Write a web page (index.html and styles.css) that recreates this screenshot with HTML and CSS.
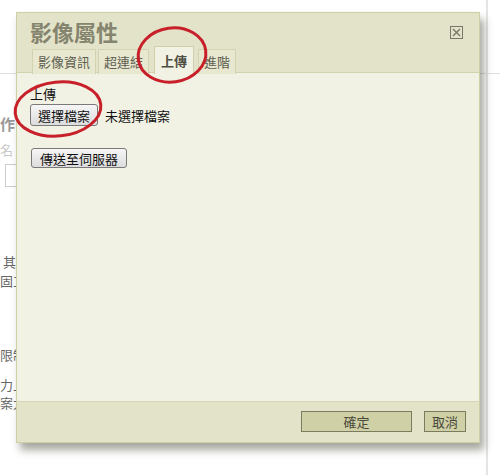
FILE: index.html
```html
<!DOCTYPE html>
<html lang="zh-Hant">
<head>
    <meta charset="UTF-8">
    <title>影像屬性</title>
    <link rel="stylesheet" href="styles.css">
</head>
<body>
    <div class="page">
        <div class="topbar"></div>
        <div class="side">
            <div class="frag bold">作</div>
            <div class="frag light">名</div>
            <div class="frag-input"></div>
            <div class="frag l1">其他</div>
            <div class="frag l2">固工</div>
            <div class="frag l3">限制</div>
            <div class="frag l4">力上</div>
            <div class="frag l5">案大</div>
        </div>
        <div class="rail"></div>

        <div class="dialog">
            <div class="dialog-head">
                <div class="title-row">
                    <h1>影像屬性</h1>
                    <span class="close">
                        <svg width="13" height="13" viewBox="0 0 13 13">
                            <rect x="0.5" y="0.5" width="12" height="12" fill="none" stroke="#76766a"/>
                            <path d="M3 3 L10 10 M10 3 L3 10" stroke="#76766a" stroke-width="1.4"/>
                        </svg>
                    </span>
                </div>
                <div class="tabs">
                    <span class="tab">影像資訊</span>
                    <span class="tab">超連結</span>
                    <span class="tab active">上傳</span>
                    <span class="tab">進階</span>
                </div>
            </div>

            <div class="dialog-body">
                <label class="field-label">上傳</label>
                <div class="file-row">
                    <button class="btn">選擇檔案</button>
                    <span>未選擇檔案</span>
                </div>
                <button class="btn send">傳送至伺服器</button>
            </div>

            <div class="dialog-foot">
                <button class="btn-foot ok">確定</button>
                <button class="btn-foot cancel">取消</button>
            </div>
        </div>

        <svg class="marks" width="500" height="475" viewBox="0 0 500 475">
            <ellipse cx="172" cy="55" rx="34" ry="27" transform="rotate(-8 172 55)" fill="none" stroke="#c8202a" stroke-width="3"/>
            <ellipse cx="58" cy="109" rx="43" ry="27" transform="rotate(-6 58 109)" fill="none" stroke="#c8202a" stroke-width="3"/>
        </svg>
    </div>
</body>
</html>
```

FILE: styles.css
```css
*{
    margin: 0;
    box-sizing: border-box;
}

body{
    font-family: "Noto Sans CJK TC", "Noto Sans", sans-serif;
    background-color: #fff;
}

.page{
    position: relative;
    width: 500px;
    height: 475px;
    overflow: hidden;
    background-color: #fff;
}

.topbar{
    height: 74px;
    border-bottom: 1px solid #dedede;
}

.side{
    width: 40px;
    font-size: 13px;
    color: #666;
    line-height: 16px;
}

.frag{
    white-space: nowrap;
}

.frag.bold{
    margin-top: 42px;
    font-weight: bold;
    color: #999;
    font-size: 15px;
}

.frag.light{
    margin-top: 10px;
    color: #c8c8c8;
}

.frag-input{
    margin: 6px 0 0 5px;
    width: 30px;
    height: 23px;
    border: 1px solid #ccc;
}

.frag.l1{
    margin-top: 67px;
    padding-left: 3px;
}

.frag.l2{
    margin-top: 3px;
}

.frag.l3{
    margin-top: 58px;
}

.frag.l4{
    margin-top: 14px;
}

.frag.l5{
    margin-top: 2px;
}

.rail{
    position: absolute;
    top: 0;
    left: 486px;
    width: 2px;
    height: 475px;
    background-color: #e4e4e4;
}

.dialog{
    position: absolute;
    top: 12px;
    left: 16px;
    width: 464px;
    height: 431px;
    display: flex;
    flex-direction: column;
    border: 1px solid #cfcfa6;
    background-color: #f1f1e4;
    box-shadow: 4px 7px 8px rgba(60, 60, 40, 0.45);
}

.dialog-head{
    background-color: #e3e3c9;
    border-bottom: 1px solid #d2d2ae;
    height: 60px;
    display: flex;
    flex-direction: column;
    justify-content: space-between;
}

.title-row{
    display: flex;
    justify-content: space-between;
    align-items: flex-start;
    padding: 3px 16px 0 13px;
}

h1{
    font-size: 22px;
    line-height: 30px;
    color: #85856f;
    font-weight: bold;
}

.close{
    margin-top: 10px;
    display: flex;
}

.tabs{
    display: flex;
    align-items: flex-end;
    gap: 2px;
    padding-left: 15px;
    margin-bottom: -1px;
}

.tab{
    font-size: 13px;
    line-height: 24px;
    padding: 0 5px;
    color: #5e5e50;
    background-color: #e8e8d0;
    border: 1px solid #d3d3b2;
    border-bottom: 0;
}

.tab.active{
    line-height: 27px;
    padding: 0 6px;
    margin: 0 2px 0 3px;
    color: #4e4e42;
    font-weight: bold;
    background-color: #f1f1e4;
    border-color: #cfcfaa;
}

.dialog-body{
    flex: 1;
    padding: 12px 13px;
    font-size: 13px;
    color: #111;
}

.field-label{
    display: block;
    line-height: 18px;
}

.file-row{
    display: flex;
    align-items: center;
    gap: 7px;
    margin-top: 1px;
}

.btn{
    font-family: inherit;
    font-size: 13px;
    color: #111;
    height: 22px;
    padding: 0 7px;
    border: 1px solid #7a7a7a;
    border-radius: 3px;
    background: linear-gradient(#f6f6f6, #dcdcdc);
}

.btn.send{
    margin-top: 22px;
    margin-left: 1px;
    height: 20px;
    padding: 0 8px;
}

.dialog-foot{
    height: 41px;
    background-color: #e3e3c9;
    border-top: 1px solid #d6d6b6;
    display: flex;
    justify-content: flex-end;
    align-items: flex-start;
    gap: 12px;
    padding: 9px 13px 0 0;
}

.btn-foot{
    font-family: inherit;
    font-size: 13px;
    color: #4a4a3c;
    height: 21px;
    padding: 0 4px;
    border: 1px solid #7b7b60;
    background-color: #d0d0a6;
}

.btn-foot.ok{
    width: 111px;
}

.btn-foot.cancel{
    width: 42px;
}

.marks{
    position: absolute;
    top: 0;
    left: 0;
    pointer-events: none;
}
```
